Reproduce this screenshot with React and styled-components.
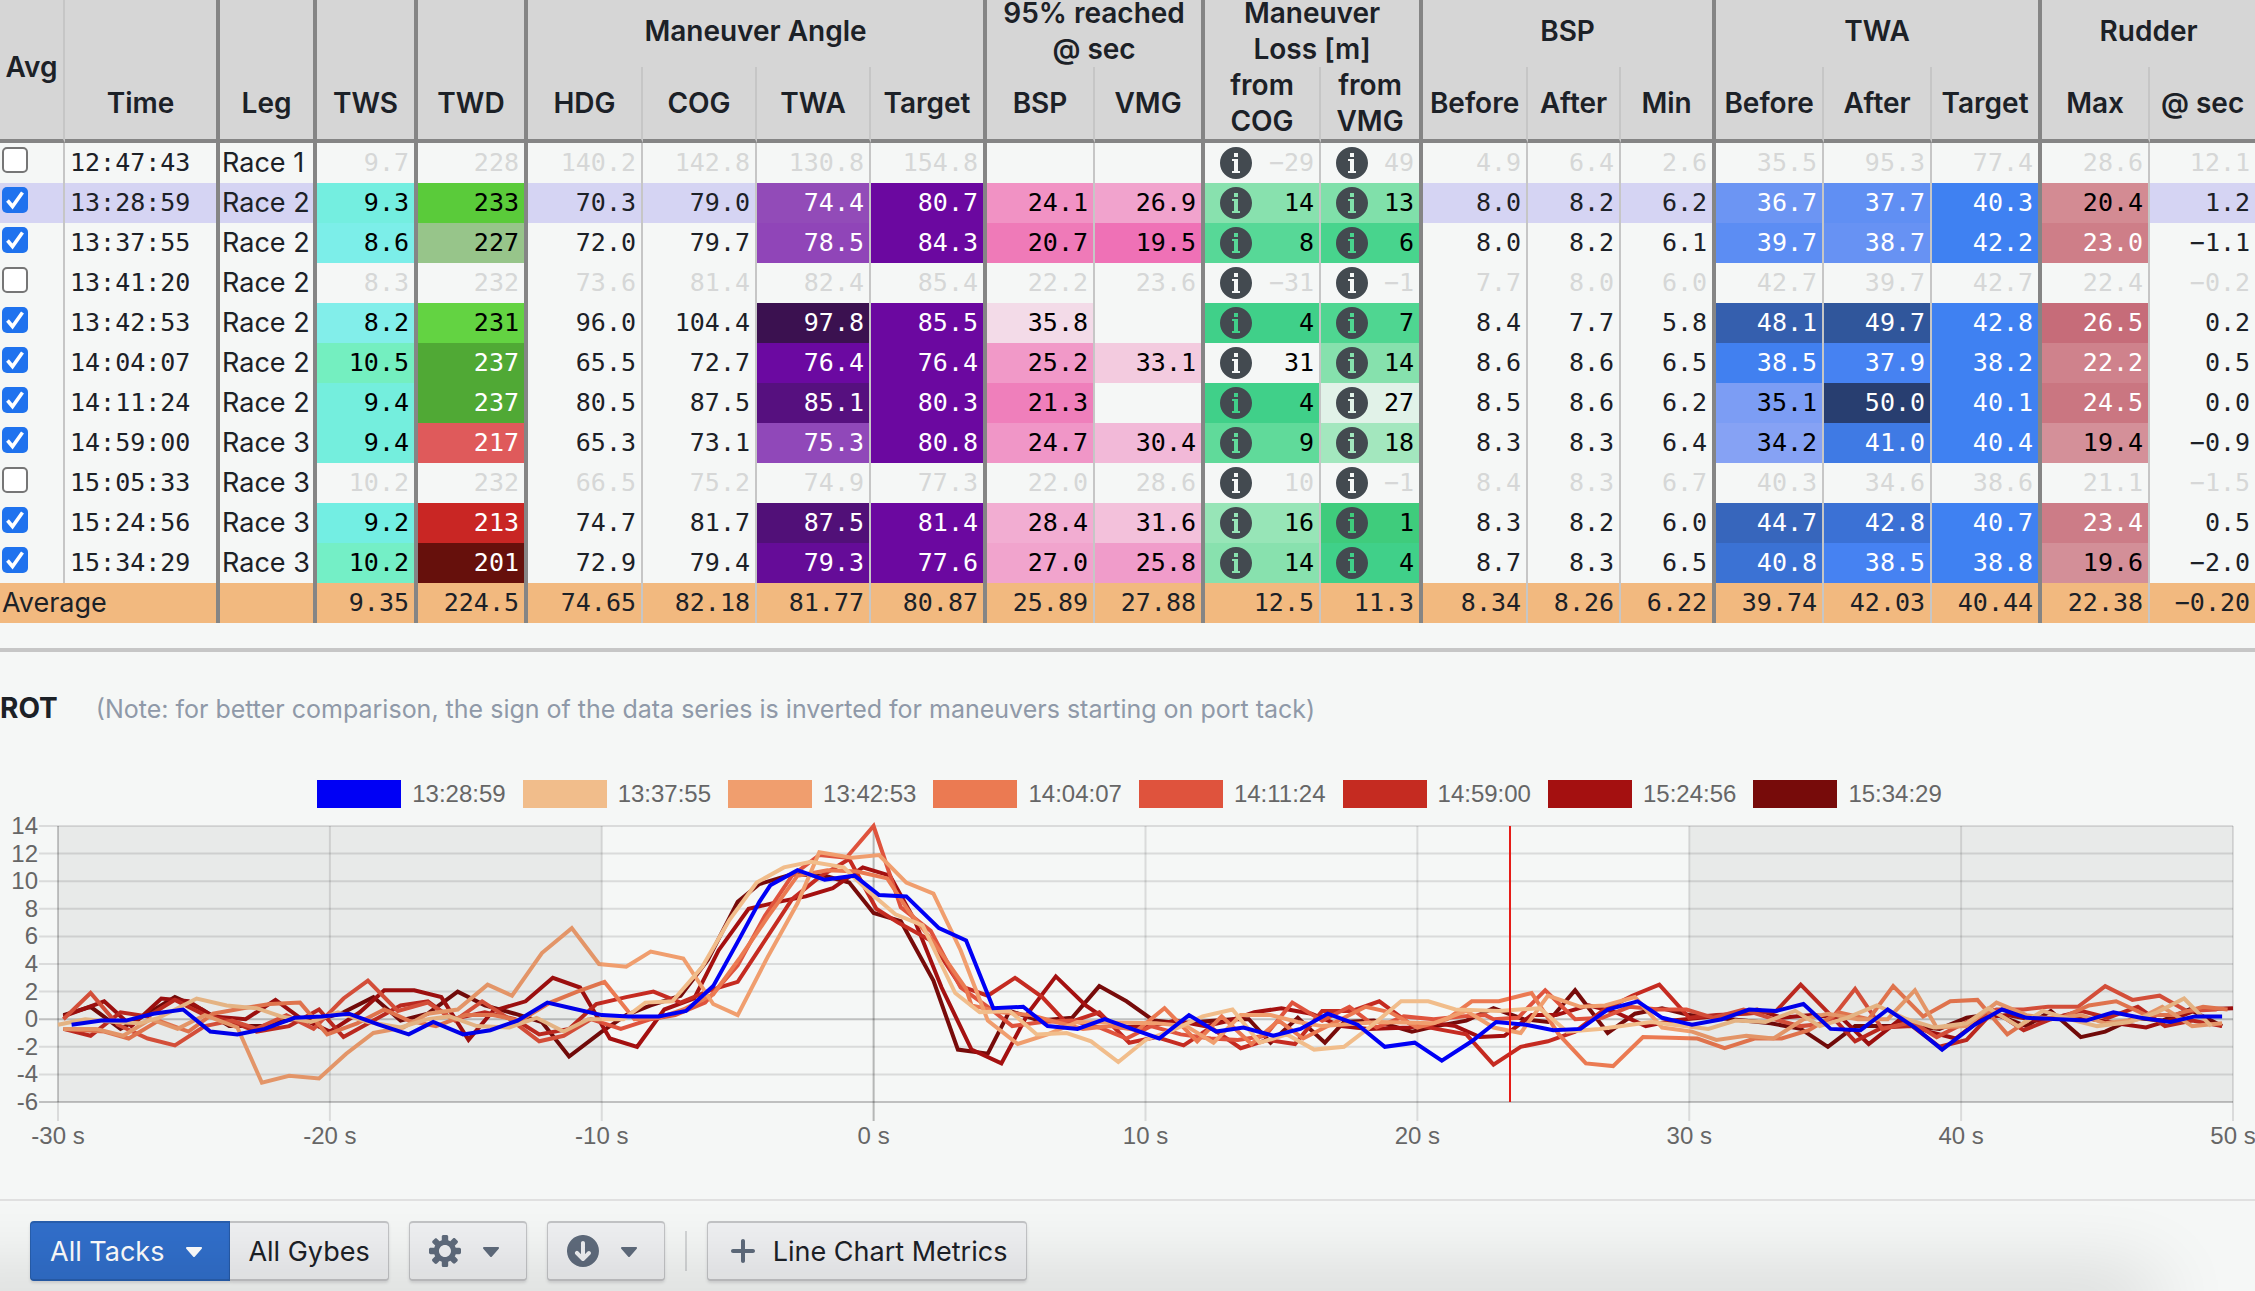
import React, { useState } from 'react';
import styled, { createGlobalStyle, css } from 'styled-components';


const GlobalStyle = createGlobalStyle`
    * {
        box-sizing: border-box;
    }

    body {
        margin: 0;
        background: #f5f7f6;
        color: #1c2127;
        font-family: Inter, 'Noto Sans', sans-serif;
        font-size: 27px;
    }
`
const Page = styled.main`
    position: relative;
    min-height: 100vh;
    overflow: hidden;
    display: flex;
    flex-direction: column;
`
const TableWrap = styled.section`
    margin-top: -5px;
    padding-bottom: 25px;
    border-bottom: 4px solid #c6c6c6;
`
const Table = styled.table`
    width: 100%;
    table-layout: fixed;
    border-collapse: separate;
    border-spacing: 0;
`
const columnLine = css`
    border-right: ${({ $line }) => {
        if ($line === 'heavy') return '4px solid #858585';
        if ($line === 'light') return '2px solid #c6c6c6';
        return 'none';
    }};
`
const HeadCell = styled.th`
    height: ${({ $last }) => $last ? '76px' : '72px'};
    padding: 0;
    background: #d6d6d6;
    font-size: 28px;
    font-weight: 600;
    line-height: 36px;
    text-align: center;
    border-bottom: ${({ $last }) => $last ? '4px solid #858585' : 'none'};
    ${columnLine}
`
const Cell = styled.td`
    height: 40px;
    padding: 0 5px;
    line-height: 40px;
    text-align: right;
    white-space: nowrap;
    font-family: 'DejaVu Sans Mono', monospace;
    font-size: 25px;
    color: ${({ $fg }) => $fg || 'inherit'};
    background: ${({ $bg }) => $bg || 'transparent'};
    ${columnLine}
`
const TimeCell = styled(Cell)`
    text-align: left;
`
const TextCell = styled(Cell)`
    padding: 0 2px;
    text-align: left;
    font-family: inherit;
    font-size: 27px;
`
const Row = styled.tr`
    background: ${({ $selected }) => $selected ? '#d5d4f3' : 'transparent'};
`
const AverageRow = styled.tr`
    background: #f2b97f;
`
const Check = styled.input`
    appearance: none;
    display: block;
    width: 26px;
    height: 26px;
    margin: 0 0 6px;
    border: 2px solid #767676;
    border-radius: 5px;
    background: #fff;

    &:checked {
        border: none;
        background: #1f72ee url("data:image/svg+xml,%3Csvg xmlns='http://www.w3.org/2000/svg' viewBox='0 0 26 26'%3E%3Cpath d='M5.5 13.5l5 6L20.5 5.5' fill='none' stroke='white' stroke-width='3.6'/%3E%3C/svg%3E");
    }
`
const InfoValue = styled.div`
    display: flex;
    align-items: center;
    justify-content: space-between;
    padding-left: 10px;
    height: 40px;
`
const Icon = styled.svg`
    flex: none;
    display: block;
    width: 32px;
    height: 32px;
    fill: ${({ $color }) => $color || '#5f6b7c'};
`

const ChartSection = styled.section`
    flex: 1;
    padding-top: 36px;
`
const ChartHead = styled.header`
    display: flex;
    align-items: baseline;
    gap: 38px;
    height: 92px;
    line-height: 40px;
`
const ChartTitle = styled.h2`
    margin: 0;
    font-size: 28px;
    font-weight: 700;
`
const ChartNote = styled.span`
    color: #8f99a8;
    font-size: 25px;
`
const Legend = styled.ul`
    display: flex;
    justify-content: center;
    gap: 17px;
    margin: 0 0 4px;
    padding: 0 0 0 4px;
    list-style: none;
`
const LegendItem = styled.li`
    display: flex;
    align-items: center;
    gap: 11px;
    height: 28px;
    color: #666;
    font-family: 'Liberation Sans', Arial, sans-serif;
    font-size: 24px;
    line-height: 28px;
`
const Swatch = styled.span`
    width: 84px;
    height: 28px;
    background: ${({ $color }) => $color};
`
const ChartSvg = styled.svg`
    display: block;
    width: 100%;
    height: auto;

    text {
        fill: #666;
        font-family: 'Liberation Sans', Arial, sans-serif;
        font-size: 24px;
    }
`

const Toolbar = styled.footer`
    display: flex;
    align-items: center;
    gap: 20px;
    padding: 20px 30px 10px;
    border-top: 2px solid #e0e0e0;
`
const ButtonGroup = styled.div`
    display: flex;
`
const Button = styled.button`
    display: flex;
    align-items: center;
    gap: 14px;
    height: 60px;
    padding: 0 19px;
    border: 2px solid #c3c4c6;
    border-width: 2px 1px;
    border-radius: 4px;
    background: #eff0f2;
    box-shadow: 0 2px 3px rgba(17, 20, 24, 0.12);
    color: #1c2127;
    font-family: inherit;
    font-size: 27px;

    ${ButtonGroup} > &:first-child {
        border-radius: 4px 0 0 4px;
    }

    ${ButtonGroup} > &:last-child {
        padding: 0 18px;
        border-left: none;
        border-radius: 0 4px 4px 0;
    }
`
const PrimaryButton = styled(Button)`
    border-color: #285fae;
    background: #316fcb;
    color: #fff;
`
const Separator = styled.span`
    width: 2px;
    height: 40px;
    background: #d3d5d6;
`
const BottomShade = styled.div`
    position: absolute;
    left: -80px;
    right: 110px;
    bottom: -20px;
    height: 20px;
    box-shadow: 0 0 80px 10px rgba(0, 0, 0, 0.2);
    pointer-events: none;
`


const INFO = 'M8 0C3.58 0 0 3.58 0 8s3.58 8 8 8 8-3.58 8-8-3.58-8-8-8zM7 3h2v2H7V3zm3 10H6v-1h1V7H6V6h3v6h1v1z';
const CARET = 'M12 6.5c0-.28-.22-.5-.5-.5h-7a.495.495 0 00-.37.83l3.5 4c.09.1.22.17.37.17s.28-.07.37-.17l3.5-4c.08-.09.13-.2.13-.33z';
const COG = 'M15.19 6.39h-1.85c-.11-.37-.27-.71-.45-1.04l1.36-1.36c.31-.31.31-.82 0-1.13l-1.13-1.13c-.31-.31-.82-.31-1.13 0l-1.36 1.36c-.33-.17-.67-.33-1.04-.44V.79c0-.44-.36-.8-.8-.8h-1.6c-.44 0-.8.36-.8.8v1.86c-.39.12-.75.28-1.1.47l-1.3-1.3c-.3-.3-.79-.3-1.09 0L1.82 2.91c-.3.3-.3.79 0 1.09l1.3 1.3c-.2.34-.36.7-.48 1.09H.79c-.44 0-.8.36-.8.8v1.6c0 .44.36.8.8.8h1.85c.11.37.27.71.45 1.04l-1.36 1.36c-.31.31-.31.82 0 1.13l1.13 1.13c.31.31.82.31 1.13 0l1.36-1.36c.33.18.67.33 1.04.44v1.86c0 .44.36.8.8.8h1.6c.44 0 .8-.36.8-.8v-1.86c.39-.12.75-.28 1.1-.47l1.3 1.3c.3.3.79.3 1.09 0l1.09-1.09c.3-.3.3-.79 0-1.09l-1.3-1.3c.19-.35.36-.71.48-1.1h1.85c.44 0 .8-.36.8-.8v-1.6a.816.816 0 00-.81-.79zm-7.2 4.6c-1.66 0-3-1.34-3-3s1.34-3 3-3 3 1.34 3 3-1.34 3-3 3z';
const DOWNLOAD = 'M7.99-.01c-4.42 0-8 3.58-8 8s3.58 8 8 8 8-3.58 8-8-3.58-8-8-8zM11.7 9.7l-3 3c-.18.18-.43.29-.71.29s-.53-.11-.71-.29l-3-3A1.003 1.003 0 015.7 8.28l1.29 1.29V3.99c0-.55.45-1 1-1s1 .45 1 1v5.59l1.29-1.29a1.003 1.003 0 011.71.71c0 .27-.11.52-.29.7z';
const PLUS = 'M13 7H9V3c0-.55-.45-1-1-1s-1 .45-1 1v4H3c-.55 0-1 .45-1 1s.45 1 1 1h4v4c0 .55.45 1 1 1s1-.45 1-1V9h4c.55 0 1-.45 1-1s-.45-1-1-1z';

const Glyph = ({ path, color }) => (
    <Icon viewBox="0 0 16 16" $color={color} aria-hidden="true">
        <path fillRule="evenodd" clipRule="evenodd" d={path} />
    </Icon>
)


const columns = [
    { width: 65, line: 'light' },
    { width: 155, line: 'heavy', title: 'Time' },
    { width: 97, line: 'heavy', title: 'Leg' },
    { width: 101, line: 'heavy', title: 'TWS' },
    { width: 110, line: 'heavy', title: 'TWD' },
    { width: 115, line: 'light', title: 'HDG' },
    { width: 114, line: 'light', title: 'COG' },
    { width: 114, line: 'light', title: 'TWA' },
    { width: 116, line: 'heavy', title: 'Target' },
    { width: 108, line: 'light', title: 'BSP' },
    { width: 110, line: 'heavy', title: 'VMG' },
    { width: 116, line: 'light', title: 'from COG', info: true },
    { width: 102, line: 'heavy', title: 'from VMG', info: true },
    { width: 105, line: 'light', title: 'Before' },
    { width: 93, line: 'light', title: 'After' },
    { width: 95, line: 'heavy', title: 'Min' },
    { width: 108, line: 'light', title: 'Before' },
    { width: 108, line: 'light', title: 'After' },
    { width: 110, line: 'heavy', title: 'Target' },
    { width: 108, line: 'light', title: 'Max' },
    { width: 105, title: '@ sec' },
];

const groups = [
    { span: 1, line: 'heavy' },
    { span: 1, line: 'heavy' },
    { span: 1, line: 'heavy' },
    { span: 1, line: 'heavy' },
    { span: 4, line: 'heavy', title: 'Maneuver Angle' },
    { span: 2, line: 'heavy', title: <>95% reached<br />@ sec</> },
    { span: 2, line: 'heavy', title: <>Maneuver<br />Loss [m]</> },
    { span: 3, line: 'heavy', title: 'BSP' },
    { span: 3, line: 'heavy', title: 'TWA' },
    { span: 2, title: 'Rudder' },
];

// k = black text on a coloured cell, w = white text
const k = (text, bg) => ({ text, bg, fg: '#000' });
const w = (text, bg) => ({ text, bg, fg: '#fff' });

const PURPLE = '#6b08a0';
const BLUE = '#3f81f2';

const maneuvers = [
    { time: '12:47:43', leg: 'Race 1', off: true, values: ['9.7', '228', '140.2', '142.8', '130.8', '154.8', '', '', '−29', '49', '4.9', '6.4', '2.6', '35.5', '95.3', '77.4', '28.6', '12.1'] },
    { time: '13:28:59', leg: 'Race 2', selected: true, values: [k('9.3', '#74eee0'), k('233', '#5acb3a'), '70.3', '79.0', w('74.4', '#924bb8'), w('80.7', PURPLE), k('24.1', '#f192c4'), k('26.9', '#f1a3cd'), k('14', '#88e1ae'), k('13', '#80e0aa'), '8.0', '8.2', '6.2', w('36.7', '#6c95f3'), w('37.7', '#608ff3'), w('40.3', BLUE), k('20.4', '#d38b93'), '1.2'] },
    { time: '13:37:55', leg: 'Race 2', values: [k('8.6', '#7ceee9'), k('227', '#97c58a'), '72.0', '79.7', w('78.5', '#9045b8'), w('84.3', PURPLE), k('20.7', '#ef7ab8'), k('19.5', '#ef71b6'), k('8', '#57d897'), k('6', '#48d48d'), '8.0', '8.2', '6.1', w('39.7', '#5c8df3'), w('38.7', '#6792f3'), w('42.2', BLUE), w('23.0', '#ce7e88'), '−1.1'] },
    { time: '13:41:20', leg: 'Race 2', off: true, values: ['8.3', '232', '73.6', '81.4', '82.4', '85.4', '22.2', '23.6', '−31', '−1', '7.7', '8.0', '6.0', '42.7', '39.7', '42.7', '22.4', '−0.2'] },
    { time: '13:42:53', leg: 'Race 2', values: [k('8.2', '#82eeea'), k('231', '#63d342'), '96.0', '104.4', w('97.8', '#3b1150'), w('85.5', PURPLE), k('35.8', '#f3dbe8'), '', k('4', '#40d089'), k('7', '#4fd691'), '8.4', '7.7', '5.8', w('48.1', '#355fae'), w('49.7', '#30569b'), w('42.8', BLUE), w('26.5', '#c66c79'), '0.2'] },
    { time: '14:04:07', leg: 'Race 2', values: [k('10.5', '#74efc0'), w('237', '#50a935'), '65.5', '72.7', w('76.4', '#6b09a1'), w('76.4', PURPLE), k('25.2', '#f199c8'), k('33.1', '#f3cbdf'), k('31'), k('14', '#86e1ad'), '8.6', '8.6', '6.5', w('38.5', '#4180f0'), w('37.9', '#4682f2'), w('38.2', BLUE), w('22.2', '#cf828c'), '0.5'] },
    { time: '14:11:24', leg: 'Race 2', values: [k('9.4', '#74eedd'), w('237', '#50a935'), '80.5', '87.5', w('85.1', '#56107f'), w('80.3', PURPLE), k('21.3', '#ef7fbb'), '', k('4', '#40d089'), k('27', '#e1f2e8'), '8.5', '8.6', '6.2', k('35.1', '#7c9df4'), w('50.0', '#283e70'), w('40.1', BLUE), w('24.5', '#ca7681'), '0.0'] },
    { time: '14:59:00', leg: 'Race 3', values: [k('9.4', '#74eedd'), w('217', '#df5a5b'), '65.3', '73.1', w('75.3', '#9048b9'), w('80.8', PURPLE), k('24.7', '#f096c7'), k('30.4', '#f2b9d8'), k('9', '#60da9a'), k('18', '#a3e7be'), '8.3', '8.3', '6.4', k('34.2', '#86a2f4'), w('41.0', '#3f7ae4'), w('40.4', BLUE), k('19.4', '#d49099'), '−0.9'] },
    { time: '15:05:33', leg: 'Race 3', off: true, values: ['10.2', '232', '66.5', '75.2', '74.9', '77.3', '22.0', '28.6', '10', '−1', '8.4', '8.3', '6.7', '40.3', '34.6', '38.6', '21.1', '−1.5'] },
    { time: '15:24:56', leg: 'Race 3', values: [k('9.2', '#73eee3'), w('213', '#c92624'), '74.7', '81.7', w('87.5', '#511078'), w('81.4', PURPLE), k('28.4', '#f2add2'), k('31.6', '#f3c1db'), k('16', '#97e5b7'), k('1', '#3fcc7c'), '8.3', '8.2', '6.0', w('44.7', '#3766bc'), w('42.8', '#3b71d5'), w('40.7', BLUE), w('23.4', '#cc7c87'), '0.5'] },
    { time: '15:34:29', leg: 'Race 3', values: [k('10.2', '#74efc6'), w('201', '#66100c'), '72.9', '79.4', w('79.3', '#650c98'), w('77.6', PURPLE), k('27.0', '#f1a4cd'), k('25.8', '#f09cca'), k('14', '#88e1ae'), k('4', '#40d089'), '8.7', '8.3', '6.5', w('40.8', '#3b72d4'), w('38.5', '#4682f2'), w('38.8', BLUE), k('19.6', '#d38f98'), '−2.0'] },
];

const averages = ['9.35', '224.5', '74.65', '82.18', '81.77', '80.87', '25.89', '27.88', '12.5', '11.3', '8.34', '8.26', '6.22', '39.74', '42.03', '40.44', '22.38', '−0.20'];

// samples are "seconds,rate" pairs
const series = [
    { time: '13:28:59', color: '#0000f5', samples: '-29.5,-.4 -28.4,-.1 -27.5,-.1 -26.5,.4 -25.4,.7 -24.4,-.9 -23.4,-1.1 -22.4,-.7 -21.3,.1 -20.3,.2 -19.3,.4 -18.2,-.4 -17.1,-1.1 -16.2,-.2 -15.1,-1.1 -14.1,-.8 -13.1,-.1 -12,1.2 -11.1,.8 -10,.3 -9,.2 -7.9,.2 -6.9,.6 -5.9,2.4 -5,5.6 -4.2,8.5 -3.8,9.7 -2.8,10.8 -1.8,10.1 -.7,10.4 .2,9 1.2,8.9 2.4,6.6 3.4,5.7 4.4,.8 5.5,.9 6.4,-.5 7.5,-.7 8.5,0 9.5,-.7 10.5,-1.4 11.6,.3 12.6,-.9 13.6,-.6 14.7,-1.2 15.7,-.7 16.7,.4 17.8,-.4 18.8,-2 19.9,-1.7 20.9,-3 22,-1.6 22.9,-.2 24,-.4 25,-.8 26,-.7 27,.7 28.1,1.3 29,.1 30.1,-.4 31.2,0 32.2,.7 33.2,.6 34.2,1.1 35.2,-.7 36.3,-.8 37.3,.7 38.3,-.6 39.3,-2.2 40.5,-.4 41.5,.7 42.4,.1 44.6,-.1 45.6,.5 46.6,.1 47.7,-.2 48.6,.2 49.6,.2' },
    { time: '13:37:55', color: '#f1bd8b', samples: '-30,-.4 -29,0 -27.9,-.2 -27,-.3 -26.3,.1 -25.6,.8 -24.9,1.5 -23.8,1 -22.7,.8 -21.8,.2 -20.7,-.2 -19.7,.5 -18.6,-.2 -17.4,-.6 -16.4,0 -15.6,.2 -14.6,-.5 -13.4,-.6 -12.4,.1 -11.4,-.9 -10.5,0 -9.2,0 -8.4,1.2 -7.4,1.3 -6.3,3.8 -5.3,7.2 -4.3,9.9 -3.3,11 -2.3,11.4 -1.1,11 -.2,9.3 .8,7.6 1.8,6.8 3,1.9 3.9,.5 5,.6 6,-1.1 7.1,-1 8,-1.6 9,-3.1 10,-1.5 11,-.8 12.1,.2 13.2,.7 14.2,-1.7 15.2,-1.1 16.2,-2.2 17.3,-2 18.3,-.5 19.4,1.3 20.4,1.3 21.4,.7 23,.6 24.5,.8 25.5,-.9 26.7,-.7 28.6,-.2 29.8,-.5 30.7,-.7 31.7,-.1 32.8,-.2 33.9,.6 34.8,-.5 35.8,.1 36.9,1 38,0 39,-.6 40.2,-.3 41,.8 42.1,-.5 43,.6 44,0 45,-.5 46.2,-.2 47.2,.5 48.2,1.5 49.2,-.5' },
    { time: '13:42:53', color: '#f09e6e', samples: '-29.8,-.7 -28.6,-.7 -27.6,-1.2 -26.6,0 -25.6,-.7 -24.6,.3 -23.4,-.6 -22.5,-4.6 -21.5,-4.1 -20.4,-4.3 -19.4,-2.5 -18.4,-1 -17.3,-.6 -16.4,.4 -15.3,.7 -14.2,2.5 -13.3,1.7 -12.2,4.8 -11.1,6.6 -10.1,4 -9.1,3.8 -8.2,4.9 -7,4.4 -5.9,1.1 -5,.3 -3.9,4.5 -2.8,8.4 -2,12.1 -.8,11.7 .2,11.9 1.2,9.9 2.2,9.1 3.2,5 4.2,-.1 5.3,-1.8 6.4,-1.1 7.5,-.2 10.4,-.3 11.5,-.5 12.5,-1.7 13.5,.3 14.6,.3 15.6,-.2 16.5,-.5 18.6,-.2 20.6,-.3 21.8,.6 22.8,-.6 23.8,-1 24.8,1.7 26,.9 26.9,1 28,1.6 29,-.6 30.1,-.9 31,-1.5 32.1,-1.2 33.1,-1.4 34.2,0 35.1,.4 36.2,0 37.3,0 38.3,2.1 39.1,-.6 40.2,-.5 41.3,1.2 42.4,.3 43.3,0 44.4,.3 45.3,-.3 46.5,0 47.4,.9 48.5,-.5 49.6,-.3' },
    { time: '14:04:07', color: '#eb7a52', samples: '-29.8,-.7 -28.3,-.9 -27.4,-1.4 -26.3,-.1 -25.2,-.9 -24.3,.4 -23.2,.8 -22.2,1.1 -21.1,1.2 -20.1,-1.1 -19,-.3 -18,.7 -17.1,-.1 -16.1,-.5 -15,.3 -14,.3 -13,-.1 -11.9,1.2 -10.9,2 -9.9,2.7 -8.8,0 -7.9,.1 -7,.7 -5.9,1.8 -4.9,4.5 -3.9,7.4 -2.8,10.4 -1.7,10.8 -.6,10.7 .5,10.2 1.3,7.8 2.2,5.6 3.4,2.2 3.6,1 4.7,.5 5.8,.3 6.7,-.2 7.7,-.7 8.7,-.5 9.7,-.8 10.7,.8 11.9,-1.6 12.8,.2 13.9,-1.8 14.9,-.1 15.8,-1.4 16.9,-.3 18.1,.9 19,.5 20,-.6 21.1,0 22,1.3 23,1.3 24.2,1.9 25.2,-1.1 26.2,-3.2 27.2,-3.4 28.3,-1.3 30.3,-1.4 31.3,-2.1 32.4,-1.4 33.4,-1.4 34.4,-.8 35.5,.5 36.6,0 37.5,2.4 38.6,.2 39.6,1.3 40.6,1.4 41.7,-1.1 42.6,.1 43.7,.1 44.7,1 45.7,1.3 46.8,.3 47.8,.3 48.9,.9 49.8,.7' },
    { time: '14:11:24', color: '#df533d', samples: '-29.8,0 -28.8,1.9 -27.8,-.4 -26.7,-1.4 -25.7,-1.9 -24.6,-.5 -23.6,-.1 -22.7,-.7 -21.6,.3 -20.6,-.7 -19.5,1.5 -18.6,2.8 -17.5,.6 -16.4,1.2 -15.4,-.1 -14.4,1.3 -13.3,-.1 -12.3,-1.6 -11.4,-1.2 -10.4,0 -9.3,-.7 -8.2,0 -7.3,.3 -6.2,1.2 -5,3.9 -4,7.5 -3,10.4 -2,11.9 -1,11.7 0,14 1,8.1 2.1,6.4 3.2,2.3 4.2,.9 5.1,-.5 6.2,-.2 7.3,-.1 8.3,-.6 9.3,-1.4 10.2,-.5 11.3,-1.1 12.4,-1.4 13.4,-1.5 14.4,-1.2 15.4,1.2 16.5,-.1 17.5,.9 18.5,-.6 19.5,.2 20.6,0 21.6,.2 22.5,.3 22.8,0 23.7,.1 24.7,2.1 25.8,0 26.8,.1 27.8,.9 28.9,.7 29.9,.7 30.9,.1 32,.7 33.1,0 34.1,-.5 35.1,-.3 36.1,2.2 37.1,-.7 38.2,-.2 39.1,-1.3 40.2,-.2 41.3,.7 42.3,.7 43.2,.9 44.3,.9 45.3,2.4 46.3,1.4 47.3,1.7 48.3,.6 49.4,.7' },
    { time: '14:59:00', color: '#c52b21', samples: '-29.8,-.7 -28.8,-1.2 -27.7,.5 -26.7,.2 -25.7,1.4 -24.6,.3 -23.7,-.1 -22.7,-.9 -21.5,-.5 -20.4,.7 -19.5,-1.3 -18.4,-.1 -17.4,1 -16.4,1.3 -15.5,0 -14.3,.5 -13.2,0 -12.3,-1.1 -11.2,-.7 -10.2,1.1 -9.1,1.6 -8.1,2 -7.1,1.2 -6,2.1 -5,2.7 -4,5.7 -3,8.7 -2,10.3 -.9,11.6 .1,8 .9,7 2.1,5.7 3.2,2.4 4.2,1.7 5.2,3 6.2,1.6 7.1,-.3 8.3,.5 9.4,-1.7 10.4,-1.3 11.4,-1.9 12.4,-.6 13.5,-2.1 14.5,-1.5 15.5,-1.8 16.5,.6 17.6,.6 18.6,1.3 19.7,-.3 20.7,-.7 21.8,-1.1 22.8,-3.3 23.8,-2 24.8,-1.6 25.8,-.9 26.8,.6 27.9,1.7 28.9,2.5 30,.1 31,.3 32.1,.4 33.2,.6 34.1,2.5 35.1,.5 36.1,-1.6 37.1,-.6 38.2,-.5 39.2,-2 40.2,-1.5 41.2,.6 42.3,-.8 43.3,0 44.4,.6 45.4,.1 46.5,.9 47.5,-.5 48.5,-.1 49.6,-.5' },
    { time: '15:24:56', color: '#a41010', samples: '-29.8,.2 -28.3,1.3 -27.3,-.5 -26.2,1.5 -25.2,1.3 -24.3,.2 -23.1,0 -22,1.4 -21.1,.1 -20,-.9 -18.9,.5 -18,2.1 -16.9,2.1 -15.9,1.6 -14.9,-1.5 -14,.6 -12.8,1.3 -11.8,3 -10.8,2.3 -9.7,-1.4 -8.7,-2 -7.7,.7 -6.6,1.5 -5.7,5 -4.6,8 -3.5,8.5 -2.5,8.9 -1.5,9.5 -.4,11 .6,10.4 1.5,7.2 2.5,2.3 3.6,-2.2 4.7,-3.2 5.7,.5 6.7,3.1 7.8,1 9,-.6 10.2,-.5 11.1,-.1 12.2,-.5 13.1,-.1 14,.5 15,.8 16.1,.4 17.2,-.5 18.2,-.7 19.7,-.6 20.7,-.3 21.4,-.5 22.3,-1.3 23.2,-1.2 24.2,.3 25.1,.3 26.3,1 27.3,.5 28.4,-.5 29.4,-.1 31.4,.3 32.5,.7 33.4,.1 34.5,.3 35.6,.1 36.6,-1.8 37.7,-.1 38.8,-.9 39.8,-1.4 40.8,.1 41.7,.3 42.8,-.1 43.9,.3 45.7,-.3 46.8,-.6 47.8,0 48.7,.7 50,.8' },
    { time: '15:34:29', color: '#770b0a', samples: '-29.8,.3 -28.8,.9 -27.7,-.7 -26.8,.3 -25.7,1.6 -24.7,.7 -23.7,-.5 -22.5,-.5 -21.4,0 -20.5,-.1 -19.5,.5 -18.4,1.6 -17.4,-.1 -16.4,.4 -15.3,2 -14.3,1 -13.2,.4 -12.2,-.2 -11.2,-2.7 -10,-.9 -9.1,.3 -8.2,1 -7.1,1.7 -6.1,4.3 -5,8.5 -4.2,9.8 -3,10.5 -1.8,10.4 -.9,9.9 0,7.7 1,7.1 2.2,2.8 3.1,-2.2 4.2,-2.5 5,.6 6.1,-.1 7.3,.1 8.3,2.4 9.3,1.3 10.3,-.1 11.3,-.3 13.2,0 13.8,0 14.6,-1.7 15.6,.1 16.6,-1.7 17.3,-.2 18.4,-.1 19.8,-.9 20.7,-.5 21.8,-.1 22.8,.8 23.9,0 24.8,-.2 25.8,2.1 27,-1 28,.4 29,.8 30,.3 31,.1 32,-.1 33,-.3 34.1,-.7 35.1,-2 36.1,-.5 38.2,-.5 39.2,-.7 40.2,.1 41.2,.4 42.4,-.5 43.3,.6 44.4,-1.3 45.3,-.9 46.4,.1 47.4,-.1 48.4,.7 49.6,-.5' },
];


const PLOT = { left: 58, right: 2233, top: 14, bottom: 290 };
const toX = (t) => PLOT.left + (t + 30) * (PLOT.right - PLOT.left) / 80;
const toY = (v) => PLOT.top + (14 - v) * (PLOT.bottom - PLOT.top) / 20;
const toPoints = (samples) => samples.split(' ').map((pair) => {
    const [t, v] = pair.split(',').map(Number);
    return `${toX(t).toFixed(1)},${toY(v).toFixed(1)}`;
}).join(' ');

const yTicks = [14, 12, 10, 8, 6, 4, 2, 0, -2, -4, -6];
const xTicks = [-30, -20, -10, 0, 10, 20, 30, 40, 50];


const RotChart = () => (
    <ChartSvg viewBox="0 0 2255 340" role="img" aria-label="ROT">
        {yTicks.map((v) => (
            <g key={v}>
                <line x1="39" x2={PLOT.right} y1={toY(v)} y2={toY(v)} stroke="#000" strokeOpacity={v === 0 || v === -6 ? 0.22 : 0.11} strokeWidth="2" />
                <text x="38" y={toY(v) + 8} textAnchor="end">{v}</text>
            </g>
        ))}
        {xTicks.map((t) => (
            <g key={t}>
                <line x1={toX(t)} x2={toX(t)} y1={PLOT.top} y2="309" stroke="#000" strokeOpacity={t === 0 ? 0.26 : 0.11} strokeWidth="2" />
                <text x={toX(t)} y="332" textAnchor="middle">{t} s</text>
            </g>
        ))}
        <line x1={PLOT.left} x2={PLOT.left} y1={PLOT.top} y2={PLOT.bottom} stroke="#000" strokeOpacity="0.11" strokeWidth="2" />
        {[...series].reverse().map((item) => (
            <polyline key={item.time} points={toPoints(item.samples)} fill="none" stroke={item.color} strokeWidth="4" />
        ))}
        <rect x={toX(-30)} y={PLOT.top} width={toX(-10) - toX(-30)} height={PLOT.bottom - PLOT.top} fill="#000" fillOpacity="0.05" />
        <rect x={toX(30)} y={PLOT.top} width={toX(50) - toX(30)} height={PLOT.bottom - PLOT.top} fill="#000" fillOpacity="0.05" />
        <line x1="1510" x2="1510" y1={PLOT.top} y2={PLOT.bottom} stroke="#e51c17" strokeWidth="2" />
    </ChartSvg>
)

const ManeuverRow = ({ item }) => {
    const [checked, setChecked] = useState(!item.off);

    return (
        <Row $selected={item.selected}>
            <TextCell $line="light">
                <Check
                    type="checkbox"
                    aria-label={item.time}
                    checked={checked}
                    onChange={(e) => setChecked(e.target.checked)}
                />
            </TextCell>
            <TimeCell $line="heavy">{item.time}</TimeCell>
            <TextCell $line="heavy">{item.leg}</TextCell>
            {item.values.map((value, i) => {
                const column = columns[i + 3];
                const cell = typeof value === 'string' ? { text: value } : value;
                return (
                    <Cell key={i} $line={column.line} $bg={cell.bg} $fg={item.off ? '#d6d7d7' : cell.fg}>
                        {column.info
                            ? <InfoValue><Glyph path={INFO} color="#434a50" />{cell.text}</InfoValue>
                            : cell.text}
                    </Cell>
                );
            })}
        </Row>
    );
}

const App = () => {
    return <React.Fragment>
        <GlobalStyle />
        <Page>
            <TableWrap>
                <Table>
                    <colgroup>
                        {columns.map((column, i) => <col key={i} width={column.width} />)}
                    </colgroup>
                    <thead>
                        <tr>
                            <HeadCell rowSpan={2} $line="light" $last>Avg</HeadCell>
                            {groups.map((group, i) => (
                                <HeadCell key={i} colSpan={group.span} $line={group.line}>{group.title}</HeadCell>
                            ))}
                        </tr>
                        <tr>
                            {columns.slice(1).map((column, i) => (
                                <HeadCell key={i} $line={column.line} $last>{column.title}</HeadCell>
                            ))}
                        </tr>
                    </thead>
                    <tbody>
                        {maneuvers.map((item) => <ManeuverRow key={item.time} item={item} />)}
                    </tbody>
                    <tfoot>
                        <AverageRow>
                            <TextCell colSpan={2} $line="heavy">Average</TextCell>
                            <TextCell $line="heavy" />
                            {averages.map((value, i) => (
                                <Cell key={i} $line={columns[i + 3].line}>{value}</Cell>
                            ))}
                        </AverageRow>
                    </tfoot>
                </Table>
            </TableWrap>

            <ChartSection>
                <ChartHead>
                    <ChartTitle>ROT</ChartTitle>
                    <ChartNote>(Note: for better comparison, the sign of the data series is inverted for maneuvers starting on port tack)</ChartNote>
                </ChartHead>
                <Legend>
                    {series.map((item) => (
                        <LegendItem key={item.time}>
                            <Swatch $color={item.color} />
                            {item.time}
                        </LegendItem>
                    ))}
                </Legend>
                <RotChart />
            </ChartSection>

            <Toolbar>
                <ButtonGroup>
                    <PrimaryButton type="button">All Tacks<Glyph path={CARET} color="#fff" /></PrimaryButton>
                    <Button type="button">All Gybes</Button>
                </ButtonGroup>
                <Button type="button" aria-label="Settings"><Glyph path={COG} /><Glyph path={CARET} /></Button>
                <Button type="button" aria-label="Download"><Glyph path={DOWNLOAD} /><Glyph path={CARET} /></Button>
                <Separator />
                <Button type="button"><Glyph path={PLUS} />Line Chart Metrics</Button>
            </Toolbar>
            <BottomShade />
        </Page>
    </React.Fragment>
}

export default App;
